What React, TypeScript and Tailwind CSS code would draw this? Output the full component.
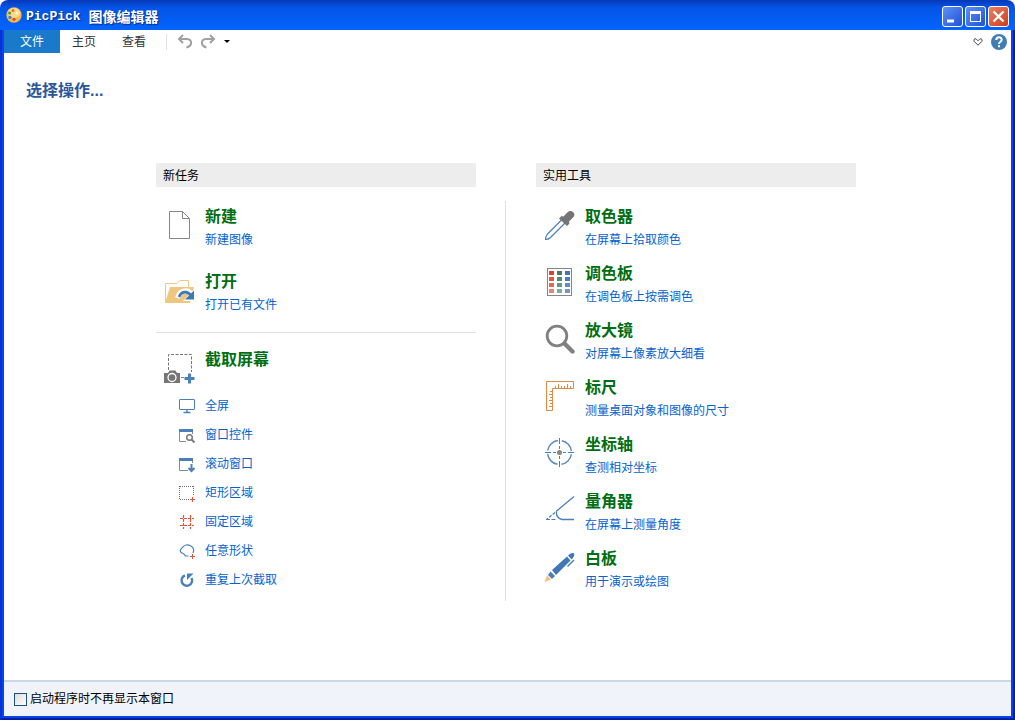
import React from "react";

type Item = { title: string; note: string; icon: React.ReactNode };
type Shot = { title: string; icon: React.ReactNode };

const BLUE = "#4a80b8";
const GRAY = "#7a7a7a";
const RED = "#e2543b";

function Icon32({ children }: { children: React.ReactNode }) {
  return (
    <svg className="mt-[5px] size-8 shrink-0" viewBox="0 0 32 32" fill="none" aria-hidden="true">
      {children}
    </svg>
  );
}

function Icon16({ children }: { children: React.ReactNode }) {
  return (
    <svg className="size-4 shrink-0 overflow-visible" viewBox="0 0 16 16" fill="none" aria-hidden="true">
      {children}
    </svg>
  );
}

const newTasks: Item[] = [
  {
    title: "新建",
    note: "新建图像",
    icon: (
      <Icon32>
        <path d="M6.500 2.500H19.500L26.500 9.500V29.500H6.500Z" fill="#fff" stroke="#858585" />
        <path d="M19.500 2.500V9.500H26.500" stroke="#858585" />
      </Icon32>
    ),
  },
  {
    title: "打开",
    note: "打开已有文件",
    icon: (
      <Icon32>
        <path d="M2.500 28V9.500H14L17 6.500H25.500V13" stroke="#ecc78a" />
        <path d="M2 29L7 13H31L27 29Z" fill="#eec67d" />
        <path d="M14.500 24C17 15.500 25 15 28.500 20" stroke="#fff" strokeWidth="5" />
        <path d="M31.500 15V27H20Z" fill="#fff" />
        <path d="M16 23C18 17 24.500 16.500 28 21.500" stroke="#3f78b5" strokeWidth="2.600" />
        <path d="M31 16.500V25.500H22Z" fill="#3f78b5" />
      </Icon32>
    ),
  },
];

const shots: Shot[] = [
  {
    title: "全屏",
    icon: (
      <Icon16>
        <rect x="0.500" y="1.500" width="15" height="10" rx="0.500" stroke={BLUE} />
        <path d="M8 12V14M4.500 14.500H11.500" stroke={BLUE} strokeWidth="1.400" />
      </Icon16>
    ),
  },
  {
    title: "窗口控件",
    icon: (
      <Icon16>
        <path d="M7 14.500H0.500V3M13.500 4V7" stroke="#8a8a8a" />
        <path d="M0 2H14V5H0Z" fill={BLUE} />
        <circle cx="10.500" cy="10.500" r="2.800" stroke={GRAY} strokeWidth="1.500" />
        <path d="M12.500 12.500L15.500 15.500" stroke={GRAY} strokeWidth="2" />
      </Icon16>
    ),
  },
  {
    title: "滚动窗口",
    icon: (
      <Icon16>
        <path d="M9 14.500H0.500V3M13.500 4V7" stroke="#8a8a8a" />
        <path d="M0 2H14V5H0Z" fill={BLUE} />
        <path d="M12.500 8V15M9.500 12L12.500 15L15.500 12" stroke={BLUE} strokeWidth="2" />
      </Icon16>
    ),
  },
  {
    title: "矩形区域",
    icon: (
      <Icon16>
        <path d="M0.500 1V15M1 1.500H15M14.500 1V11M1 14.500H11" stroke="#707070" strokeDasharray="1 1" />
        <path d="M13.500 12V17M11 14.500H16" stroke={RED} />
      </Icon16>
    ),
  },
  {
    title: "固定区域",
    icon: (
      <Icon16>
        <path d="M4.500 1V15M11.500 1V15M1 4.500H15M1 11.500H15" stroke={RED} strokeWidth="1.200" strokeDasharray="3 1" />
      </Icon16>
    ),
  },
  {
    title: "任意形状",
    icon: (
      <Icon16>
        <path
          d="M9.500 13H6.500C5.500 12 5.500 11 4 10.500C1.500 10 0.500 8 2 6C3.500 4.500 4.500 2.500 7 2C10 1.500 13.500 3 14.500 6C15 7.500 14.500 8.500 14 10"
          stroke={BLUE}
          strokeWidth="1.200"
        />
        <path d="M13.500 11V16M11 13.500H16" stroke={RED} />
      </Icon16>
    ),
  },
  {
    title: "重复上次截取",
    icon: (
      <Icon16>
        <path d="M6 3.500A5.300 5.300 0 1 0 12.500 6" stroke={BLUE} strokeWidth="2.400" />
        <path d="M8 1.500H14.500L8 8Z" fill={BLUE} />
      </Icon16>
    ),
  },
];

const swatches = [
  ["#d9452c", "#3f7f5f", "#3f78b5"],
  ["#dd5a40", "#4d8f6c", "#4a80b8"],
  ["#e06a52", "#5c9e82", "#5f8fbf"],
  ["#e88570", "#76b096", "#7299bd"],
];

const tools: Item[] = [
  {
    title: "取色器",
    note: "在屏幕上拾取颜色",
    icon: (
      <Icon32>
        <path
          d="M18.500 11L4.500 25C3 27 2.500 28.500 2.500 30.500C4.500 30.500 6 30 7.500 28.500L22 14"
          stroke={BLUE}
          strokeWidth="1.200"
          strokeLinejoin="round"
        />
        <path
          d="M16 9.500L18.500 7L20.500 7.500L24.500 3.300C28.500 -0.500 33.500 4.500 30.500 8L26 12.500L26.500 14.500L24 17Z"
          fill="#757575"
        />
      </Icon32>
    ),
  },
  {
    title: "调色板",
    note: "在调色板上按需调色",
    icon: (
      <Icon32>
        <rect x="4.500" y="2.500" width="24" height="27" stroke="#858585" />
        {swatches.map((row, y) =>
          row.map((c, x) => <rect key={`${x}-${y}`} x={6 + x * 8} y={5 + y * 6} width="5" height="4" fill={c} />),
        )}
      </Icon32>
    ),
  },
  {
    title: "放大镜",
    note: "对屏幕上像素放大细看",
    icon: (
      <Icon32>
        <circle cx="14" cy="13" r="9.800" stroke="#808080" strokeWidth="2.800" />
        <path d="M21.500 20.500L29.500 28.500" stroke="#808080" strokeWidth="4.400" strokeLinecap="round" />
      </Icon32>
    ),
  },
  {
    title: "标尺",
    note: "测量桌面对象和图像的尺寸",
    icon: (
      <Icon32>
        <path d="M3.500 1.500H30.500V8.500H9.500V30.500H3.500Z" stroke="#df8a45" />
        <path
          d="M12.500 8V6M15.500 8V4M18.500 8V6M21.500 8V6M24.500 8V4M27.500 8V6M9 11.500H7M9 14.500H6M9 17.500H7M9 20.500H6M9 23.500H7M9 26.500H6"
          stroke="#df8a45"
        />
      </Icon32>
    ),
  },
  {
    title: "坐标轴",
    note: "查测相对坐标",
    icon: (
      <Icon32>
        <circle
          cx="16.500"
          cy="15.500"
          r="12"
          stroke="#5a8cc0"
          strokeWidth="1.500"
          strokeDasharray="14.850 4"
          strokeDashoffset="-2"
        />
        <path
          d="M2 15.500H8M10 15.500H13M20 15.500H23M25 15.500H31M16.500 1V7M16.500 9V12M16.500 19V22M16.500 24V30"
          stroke="#4a80b8"
        />
        <circle cx="16.500" cy="15.500" r="2.500" fill="#858585" />
      </Icon32>
    ),
  },
  {
    title: "量角器",
    note: "在屏幕上测量角度",
    icon: (
      <Icon32>
        <path d="M13 17.500L31 2.500" stroke={BLUE} strokeWidth="1.300" />
        <path d="M12 18.500L4 25" stroke={BLUE} strokeWidth="1.300" strokeDasharray="3 1.500" />
        <path d="M3 25.500H14" stroke={BLUE} strokeDasharray="4 1.500" />
        <path d="M13.500 17.500C13 21.500 15 24.500 19 25.500H31" stroke={BLUE} strokeWidth="1.300" />
      </Icon32>
    ),
  },
  {
    title: "白板",
    note: "用于演示或绘图",
    icon: (
      <Icon32>
        <path d="M1.500 31L4 24.500L8 28.500Z" fill="#efc27a" />
        <path d="M7.500 20.500L12 25L9 28L5 24Z" fill={BLUE} />
        <path d="M9 19L24 5.500L27.500 9.500L13 24Z" fill="#3f78b5" />
        <path d="M25 4.500C27 2.500 29.500 1.500 31 2.500C32 4 30.500 6.500 28.500 8.500Z" fill="#3f78b5" />
        <path d="M31 9L24.500 15.500" stroke={BLUE} strokeWidth="1.500" />
      </Icon32>
    ),
  },
];

function ItemLink({ item }: { item: Item }) {
  return (
    <li>
      <a href="#" className="flex gap-[10px] pl-[7px]">
        {item.icon}
        <span className="flex flex-col">
          <strong className="text-base leading-[26px] font-bold text-[#006e12]">{item.title}</strong>
          <span className="text-xs leading-5 text-[#0563cf]">{item.note}</span>
        </span>
      </a>
    </li>
  );
}

function SectionTitle({ children }: { children: React.ReactNode }) {
  return <h2 className="h-6 bg-[#ededee] pl-[7px] text-xs leading-[26px] text-black">{children}</h2>;
}

function TitleBar() {
  const box = "flex size-[21px] items-center justify-center rounded-[3px] border border-white";
  return (
    <header className="flex h-[30px] shrink-0 items-center rounded-t-lg bg-linear-to-b from-[#0838b8] via-[#0355e6] via-25% to-[#0564ff] pr-[6px] pl-[6px]">
      <svg className="size-4" viewBox="0 0 16 16" aria-hidden="true">
        <circle cx="8" cy="8" r="7.700" fill="#f6b94a" />
        <ellipse cx="8" cy="6" rx="6.200" ry="5" fill="#fbd98d" />
        <circle cx="7" cy="3.500" r="1.500" fill="#f0703a" />
        <circle cx="3.600" cy="6" r="1.600" fill="#4b9b42" />
        <circle cx="4" cy="10.300" r="1.600" fill="#3b7ed0" />
        <circle cx="8" cy="12.300" r="1.500" fill="#d9452c" />
        <circle cx="11" cy="6" r="1.500" fill="#fff3d0" />
      </svg>
      <h1 className="flex flex-1 items-center gap-2 pt-1 pl-1 font-bold text-white [text-shadow:1px_1px_1px_#0a2a80]">
        <span className="font-['Liberation_Mono',monospace] text-[13px]">PicPick</span>
        <span className="text-sm leading-5">图像编辑器</span>
      </h1>
      <div className="flex gap-[2px] pt-[3px]">
        <button type="button" aria-label="最小化" className={`${box} bg-linear-to-br from-[#5f90f5] to-[#1f50d8]`}>
          <svg className="size-[19px]" viewBox="0 0 19 19" aria-hidden="true">
            <path d="M4 12.500H11V15.500H4Z" fill="#fff" />
          </svg>
        </button>
        <button type="button" aria-label="最大化" className={`${box} bg-linear-to-br from-[#5f90f5] to-[#1f50d8]`}>
          <svg className="size-[19px]" viewBox="0 0 19 19" aria-hidden="true">
            <path d="M4 4H15V15H4ZM5 7V14H14V7Z" fill="#fff" fillRule="evenodd" />
          </svg>
        </button>
        <button type="button" aria-label="关闭" className={`${box} bg-linear-to-br from-[#ec7f60] to-[#cf3a14]`}>
          <svg className="size-[19px]" viewBox="0 0 19 19" aria-hidden="true">
            <path d="M4.500 4.500L14.500 14.500M14.500 4.500L4.500 14.500" stroke="#fff" strokeWidth="2.400" />
          </svg>
        </button>
      </div>
    </header>
  );
}

function MenuBar() {
  return (
    <nav className="flex h-[23px] shrink-0 items-center bg-white pr-1 text-xs text-[#333]">
      <button type="button" className="h-full w-14 bg-[#1979ca] pt-px text-white">文件</button>
      <button type="button" className="h-full w-12 pt-px">主页</button>
      <button type="button" className="ml-[2px] h-full w-12 pt-px">查看</button>
      <span className="ml-2 h-4 w-px bg-[#e2e3e5]" />
      <button type="button" aria-label="撤销" className="ml-[10px]">
        <svg className="size-4" viewBox="0 0 16 16" fill="none" stroke="#a0a0a0" strokeWidth="2" aria-hidden="true">
          <path d="M6 1L2 5L6 9M2 5H10C15.500 5.500 15.500 12 9.500 13.500" />
        </svg>
      </button>
      <button type="button" aria-label="重做" className="ml-[7px]">
        <svg className="size-4" viewBox="0 0 16 16" fill="none" stroke="#a0a0a0" strokeWidth="2" aria-hidden="true">
          <path d="M10 1L14 5L10 9M14 5H6C0.500 5.500 0.500 12 6.500 13.500" />
        </svg>
      </button>
      <button type="button" aria-label="更多" className="ml-2">
        <svg className="h-[3px] w-[6px]" viewBox="0 0 6 3" aria-hidden="true">
          <path d="M0 0H6L3 3Z" fill="#000" />
        </svg>
      </button>
      <button type="button" aria-label="折叠功能区" className="ml-auto">
        <svg className="h-2 w-[10px]" viewBox="0 0 10 8" fill="none" stroke="#4a4a55" aria-hidden="true">
          <path d="M5 7.200L1 3.200V1.500L2 0.800H3L5 2.800L7 0.800H8L9 1.500V3.200Z" />
        </svg>
      </button>
      <button type="button" aria-label="帮助" className="ml-2 size-4 rounded-full bg-[#417db5] text-white">
        <svg className="size-4" viewBox="0 0 16 16" fill="none" aria-hidden="true">
          <path d="M5.300 6C5.300 2.500 10.700 2.500 10.700 5.700C10.700 7.800 8 7.700 8 10" stroke="#fff" strokeWidth="2" />
          <path d="M7 11.200H9V13.200H7Z" fill="#fff" />
        </svg>
      </button>
    </nav>
  );
}

export default function App() {
  return (
    <div className="flex min-h-screen flex-col bg-white font-['Liberation_Sans','Noto_Sans_CJK_SC',sans-serif]">
      <TitleBar />
      <div className="flex flex-1 flex-col border-x-2 border-b-2 border-t-0 border-r-[#001ea0] border-b-[#001ea0] border-l-[#0831d9]">
        <div className="flex flex-1 flex-col border-x-2 border-b-2 border-[#0845e8]">
          <MenuBar />
          <main className="flex-1 bg-white pr-[3px]">
            <p className="pt-[26px] pl-[22px] text-base leading-6 font-bold text-[#2b579a]">选择操作...</p>
            <div className="mt-[60px] flex justify-center">
              <section className="w-80">
                <SectionTitle>新任务</SectionTitle>
                <ul className="mt-[17px] flex flex-col gap-[19px]">
                  {newTasks.map((item) => (
                    <ItemLink key={item.title} item={item} />
                  ))}
                </ul>
                <hr className="mt-[17px] border-[#dfe1e3]" />
                <div className="mt-[14px] flex h-11 gap-[10px] pl-[7px]">
                  <Icon32>
                    <path d="M5.500 18V2.500H28.500V20" stroke="#757575" strokeDasharray="3 1.500" />
                    <path d="M18 25.500H21" stroke="#808080" />
                    <path d="M1 21H5L6.500 18.500H12.500L14 21H17V31H1Z" fill="#757575" />
                    <circle cx="9" cy="25.500" r="4" fill="#757575" stroke="#fff" strokeWidth="1.300" />
                    <path d="M26.500 21.500V31.500M21.500 26.500H31.500" stroke={BLUE} strokeWidth="3" />
                  </Icon32>
                  <h3 className="text-base leading-[26px] font-bold text-[#006e12]">截取屏幕</h3>
                </div>
                <ul>
                  {shots.map((shot) => (
                    <li key={shot.title}>
                      <a href="#" className="flex h-[29px] items-center gap-[10px] pl-[23px] text-xs text-[#0563cf]">
                        {shot.icon}
                        {shot.title}
                      </a>
                    </li>
                  ))}
                </ul>
              </section>
              <div className="mt-[38px] mr-[30px] ml-[29px] h-[400px] w-px bg-[#dfe1e3]" />
              <section className="w-80">
                <SectionTitle>实用工具</SectionTitle>
                <ul className="mt-[17px] flex flex-col gap-[11px]">
                  {tools.map((item) => (
                    <ItemLink key={item.title} item={item} />
                  ))}
                </ul>
              </section>
            </div>
          </main>
          <footer className="flex h-9 shrink-0 items-center border-t-2 border-[#c8d8e6] bg-[#f0f3fa] pl-[10px]">
            <label className="flex items-center gap-[3px] text-xs text-black">
              <input
                type="checkbox"
                className="size-[13px] appearance-none border border-[#1c5180] bg-linear-to-br from-[#dcdcd7] to-white checked:bg-[#1c5180]"
              />
              启动程序时不再显示本窗口
            </label>
          </footer>
        </div>
      </div>
    </div>
  );
}
